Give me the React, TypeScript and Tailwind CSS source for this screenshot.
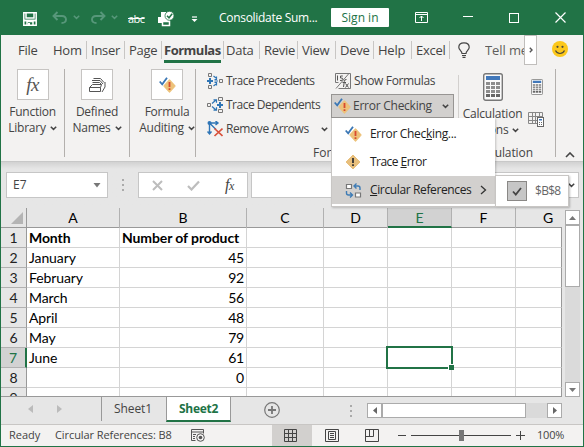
import React from "react";

type P = { className?: string; children?: React.ReactNode };

const Svg = ({ w, h, className = "", children }: P & { w: number; h: number }) => (
  <svg width={w} height={h} viewBox={`0 0 ${w} ${h}`} fill="none" className={"block shrink-0 " + className}>
    {children}
  </svg>
);

const Chevron = ({ className = "text-[#444]" }: P) => (
  <Svg w={7} h={5} className={className}>
    <path d="M.8 .8 3.5 3.4 6.2 .8" stroke="currentColor" strokeWidth="1.5" />
  </Svg>
);

const Slot = ({ className = "", children }: P) => (
  <div className={"flex h-full shrink-0 items-center whitespace-nowrap " + className}>{children}</div>
);

const Check = () => <path d="M.7 4.500 3.200 7.300 8 .8" stroke="#3a76b4" strokeWidth="1.8" />;

const ErrorIcon = () => (
  <Svg w={17} h={16}>
    <path d="M10.5 3 16 9l-5.5 6L5 9z" fill="#edc27a" stroke="#edc27a" strokeWidth="1.2" strokeLinejoin="round" />
    <path d="M10.5 5v5M10.5 11.3v1.7" stroke="#d84a30" strokeWidth="1.8" />
    <Check />
  </Svg>
);

const WarnIcon = () => (
  <Svg w={16} h={16}>
    <path d="M8 1 15 8 8 15 1 8z" fill="#e8bf7c" stroke="#e8bf7c" strokeLinejoin="round" />
    <path d="M8 4v5M8 10.3V12" stroke="#333" strokeWidth="1.8" />
  </Svg>
);

const Precedents = () => (
  <Svg w={16} h={16}>
    <path d="M1.5 .5h3v3h-3zM1.5 12.5h3v3h-3zM12.5 6.5h3v3h-3z" stroke="#777" />
    <path d="M0 8h6M3 5v6" stroke="#2e75b6" strokeWidth="2" />
    <path d="M6.5 3 10 5.7M6.5 13 10 10.3M7.5 8H11M9.5 3.5v3h-2M9.5 12.5v-3h-2" stroke="#2e75b6" strokeWidth="1.2" />
  </Svg>
);

const Dependents = () => (
  <Svg w={16} h={16}>
    <path d="M.5 6.5h3v3h-3zM11.5 .5h4v3h-4zM11.5 12.5h4v3h-4z" stroke="#777" />
    <path d="M10 8h6M13 5v6" stroke="#2e75b6" strokeWidth="2" />
    <path d="M5 6.5 9 3M5 9.5 9 13M6.5 2.8h3v3M6.5 13.2h3v-3" stroke="#2e75b6" strokeWidth="1.2" />
  </Svg>
);

const RemoveArrows = () => (
  <Svg w={16} h={16}>
    <path d="M2.5 1v12M2.5 2h8M3 2.5l6 6M.5 10.5l2 2.5 2-2.5M8.5 0 11 2 8.5 4" stroke="#2e75b6" strokeWidth="1.4" />
    <circle cx="2.5" cy="2" r="2" fill="#2e75b6" />
    <path d="M7.5 7.5 15.5 15M15.5 7.5 7.5 15" stroke="#d8503a" strokeWidth="1.7" />
  </Svg>
);

const ShowFormulas = () => (
  <Svg w={16} h={16}>
    <path d="M.5 .5h15v15H3.500M.5 .5v9h3M1 15.500 13.500 1" stroke="#777" />
    <path d="M2.500 2.500v5M7.800 3H5.500v2q2.500-.3 2.500 1.200T5 7.500" stroke="#555" />
    <path d="M11.500 6.500q-2-.3-2.200 2L8.500 14M7.500 9.500h3.500M10.500 10.500l3 4M13.500 10.500l-3 4" stroke="#555" />
  </Svg>
);

const CircularIcon = () => (
  <Svg w={17} h={15}>
    <path d="M1.5 1.500h5v4h-5zM10.500 10h5v4h-5z" stroke="#777" strokeWidth="1.200" fill="#fff" />
    <path d="M9 3h4q2 0 2 2v2M11.500.5 9 3l2.500 2.500M1.500 8v2q0 2 2 2h4M5 9.500 7.500 12 5 14.500" stroke="#3f7cb5" strokeWidth="1.400" />
  </Svg>
);

const Calculator = ({ w, h }: { w: number; h: number }) => (
  <svg width={w} height={h} viewBox="0 0 20 28" className="block shrink-0" fill="none" preserveAspectRatio="none">
    <rect x=".7" y=".7" width="18.600" height="26.600" rx="2" fill="#fafafa" stroke="#777" strokeWidth="1.400" />
    <path d="M3 3h14v4H3z" fill="#4178ba" />
    {[9, 13, 17, 21].map((y) =>
      [3, 8, 13].map((x) => <path key={x + "-" + y} d={`M${x} ${y}h4v3h-4z`} fill={y > 20 ? "#666" : "#8d8d8d"} />)
    )}
  </svg>
);

const tabs: [string, string, boolean][] = [
  ["File", "w-[35px]", false],
  ["Hom", "w-[38px]", true],
  ["Inser", "w-[38px]", true],
  ["Page", "w-[37px]", true],
];
const tabs2: [string, string, boolean][] = [
  ["Data", "w-[38px]", true],
  ["Revie", "w-[38px]", true],
  ["View", "w-[38px]", true],
  ["Deve", "w-[38px]", true],
  ["Help", "w-[38px]", true],
  ["Excel", "w-[38px]", true],
];

const Tab = ({ t }: { t: [string, string, boolean] }) => (
  <div className={"relative flex h-[30px] shrink-0 items-center pt-[2px] tracking-[-0.25px] " + t[1]}>
    {t[0]}
    {t[2] && <span className="absolute right-[4px] top-[6px] h-[18px] w-px bg-[#c8c6c4]" />}
  </div>
);

const BigGroup = ({ icon, a, b, className = "" }: { icon: React.ReactNode; a: string; b: string; className?: string }) => (
  <div className={"mt-1 flex h-[88px] shrink-0 flex-col items-center border-r border-[#b3b0ad] tracking-[-0.25px] " + className}>
    <div className="flex h-[31px] w-8 items-center justify-center border border-[#c6c4c2] bg-white">{icon}</div>
    <div className="mt-1 flex h-4 items-center">{a}</div>
    <div className="flex h-4 items-center gap-1">
      {b}
      <Chevron />
    </div>
  </div>
);

const rows: [string, string][] = [
  ["Month", "Number of product"],
  ["January", "45"],
  ["February", "92"],
  ["March", "56"],
  ["April", "48"],
  ["May", "79"],
  ["June", "61"],
  ["", "0"],
  ["", ""],
];
const cols: [string, string][] = [
  ["A", "w-[93px]"],
  ["B", "w-[127px]"],
  ["C", "w-[77px]"],
  ["D", "w-[64px]"],
  ["E", "w-[64px]"],
  ["F", "w-[64px]"],
  ["G", "w-[46px]"],
];

function TitleBar() {
  return (
    <div className="flex h-[35px] shrink-0 items-center bg-[#217346] text-white">
      <Slot className="w-[51px] pl-[22px]">
        <Svg w={14} h={14} className="mt-[3px]">
          <path d="M.8 .8h12.400v12.400H.8zM3 1v5h8V1M4 13V9.500h6V13" stroke="#fff" strokeWidth="1.500" />
          <path d="M1 7.500h12v2H1zM5 11h2v2H5z" fill="#fff" />
        </Svg>
      </Slot>
      <Slot className="w-[39px] gap-[6px]">
        <Svg w={15} h={13} className="text-[#57977a]">
          <path d="M5.500 1 1.500 5l4 4M2 5h8q4 0 4 3.500T9.500 12" stroke="currentColor" strokeWidth="1.900" />
        </Svg>
        <Chevron className="text-[#57977a]" />
      </Slot>
      <Slot className="w-[37px] gap-[5px]">
        <Svg w={15} h={13} className="text-[#57977a]">
          <path d="m9.500 1 4 4-4 4M13 5H5Q1 5 1 8.500T5.500 12" stroke="currentColor" strokeWidth="1.900" />
        </Svg>
        <Chevron className="text-[#57977a]" />
      </Slot>
      <Slot className="w-[30px] pt-[3px] text-[11px] tracking-[-0.5px] line-through">abc</Slot>
      <Slot className="w-[33px]">
        <Svg w={17} h={16} className="mt-[3px]">
          <path d="M3 1h5v5H3zM0 6h12v6H0z" fill="#fff" />
          <path d="M4.500 10.500h7v4h-7z" fill="#217346" stroke="#fff" strokeWidth="1.500" />
          <circle cx="11.500" cy="4.800" r="4.500" fill="#fff" stroke="#217346" strokeWidth=".8" />
          <path d="m9 4.800 2 2 3.200-4" stroke="#217346" strokeWidth="1.500" />
        </Svg>
      </Slot>
      <Slot className="w-[28px]">
        <Svg w={7} h={7} className="mt-[3px]">
          <path d="M1 1h5" stroke="#fff" strokeWidth="1.200" />
          <path d="M.5 3h6l-3 3z" fill="#fff" />
        </Svg>
      </Slot>
      <Slot className="w-[112px] text-[12px] tracking-[-0.3px]">Consolidate Sum...</Slot>
      <div className="flex h-[19px] w-[58px] items-center justify-center rounded-[1px] bg-white text-[12px] text-[#217346]">
        Sign in
      </div>
      <Slot className="w-[74px] pl-[26px]">
        <Svg w={13} h={11}>
          <path d="M.5 .5h12v10H.5zM.5 2.500h12M6.500 9V4M4.500 6l2-2 2 2" stroke="#fff" />
        </Svg>
      </Slot>
      <Slot className="w-[46px]">
        <div className="mb-[2px] h-px w-[10px] bg-white" />
      </Slot>
      <Slot className="w-[46px]">
        <div className="size-[10px] border border-white" />
      </Slot>
      <Svg w={11} h={11}>
        <path d="m.5 .5 10 10m0-10-10 10" stroke="#fff" strokeWidth="1.200" />
      </Svg>
    </div>
  );
}

function TabStrip() {
  return (
    <div className="flex h-[30px] shrink-0 items-center pl-[17px] text-[13px] text-[#444]">
      {tabs.map((t) => (
        <Tab key={t[0]} t={t} />
      ))}
      <div className="relative -ml-[2px] flex h-[30px] w-[62px] shrink-0 items-center pt-[2px] font-bold tracking-[-0.5px]">
        Formulas
        <span className="absolute bottom-[2px] left-0 h-[3px] w-[57px] bg-[#217346]" />
        <span className="absolute right-[2px] top-[6px] h-[18px] w-px bg-[#c8c6c4]" />
      </div>
      {tabs2.map((t) => (
        <Tab key={t[0]} t={t} />
      ))}
      <Slot className="w-[31px] pl-[4px]">
        <Svg w={12} h={16}>
          <path d="M4 11.500Q4 10 2.300 8.300 .8 7 .8 5.300.8 .8 6 .8t5.200 4.500q0 1.700-1.500 3Q8 10 8 11.500zM4 13.500h4M4.500 15.300h3" stroke="#444" strokeWidth="1.200" />
        </Svg>
      </Slot>
      <div className="w-[39px] shrink-0 overflow-hidden whitespace-nowrap pt-[2px] tracking-[-0.1px] text-[#605e5c]">Tell me</div>
      <div className="flex h-[30px] w-[13px] shrink-0 items-center justify-center border border-[#c0bebc] bg-white">
        <Svg w={4} h={6}>
          <path d="m.8 .8 2.200 2.200L.8 5.200" stroke="#555" strokeWidth="1.400" />
        </Svg>
      </div>
      <Svg w={16} h={16} className="mb-[2px] ml-[15px]">
        <circle cx="8" cy="8" r="8" fill="#fcc81b" />
        <circle cx="5.500" cy="5.800" r="1.100" fill="#4b4a3c" />
        <circle cx="10.500" cy="5.800" r="1.100" fill="#4b4a3c" />
        <path d="M3.500 9.500q1.500 3 4.500 3t4.500-3" stroke="#4b4a3c" strokeWidth="1.200" />
      </Svg>
    </div>
  );
}

const fx = "font-['Liberation_Serif',serif] italic";

function Ribbon() {
  return (
    <div className="relative flex h-[96px] shrink-0 text-[12px] leading-4 text-[#444]">
      <BigGroup
        className="w-[64px]"
        a="Function"
        b="Library"
        icon={<span className={fx + " text-[19px] tracking-[-0.5px] text-[#555]"}>fx</span>}
      />
      <BigGroup
        className="w-[65px]"
        a="Defined"
        b="Names"
        icon={
          <Svg w={17} h={16}>
            <path d="M.5 10.500h11v4H.5zM.5 10.500l3-3h9l-1 3M3.500 5.500h7l2 2M3 3.500h8l3 3.500M4.500 1.500h7l3.500 4M13 15l3-5V5" stroke="#555" />
          </Svg>
        }
      />
      <BigGroup className="w-[66px] pl-[9px]" a="Formula" b="Auditing" icon={<ErrorIcon />} />
      <div className="flex w-[264px] shrink-0 flex-col pt-1">
        <div className="flex h-[72px]">
          <div className="flex w-[135px] shrink-0 flex-col pl-[11px]">
            <Slot className="!h-6 gap-[3px] tracking-[-0.5px]"><Precedents />Trace Precedents</Slot>
            <Slot className="!h-6 gap-[3px] tracking-[-0.5px]"><Dependents />Trace Dependents</Slot>
            <Slot className="!h-6 gap-[3px] tracking-[-0.4px]"><RemoveArrows /><span className="w-[92px]">Remove Arrows</span><Chevron /></Slot>
          </div>
          <div className="flex w-[123px] shrink-0 flex-col">
            <Slot className="!h-6 gap-[3px] pl-[4px] tracking-[-0.35px]"><ShowFormulas />Show Formulas</Slot>
            <div className="mt-[1px] flex h-[24px] items-center gap-[2px] border border-[#979593] bg-[#d2d0ce] pl-[2px] tracking-[-0.25px]">
              <ErrorIcon />
              <span className="w-[87px]">Error Checking</span>
              <Chevron />
            </div>
          </div>
        </div>
        <div className="mt-[4px] pl-[117px]">Formula Auditing</div>
      </div>
      <div className="-ml-[2px] mt-1 flex h-[88px] w-[98px] shrink-0 border-r border-[#b3b0ad]">
        <div className="mt-[6px] h-[55px] w-px bg-[#d2d0ce]" />
        <div className="flex w-[67px] shrink-0 flex-col items-center pt-[4px]">
          <Calculator w={20} h={28} />
          <div className="mt-[5px] h-4 tracking-[-0.2px]">Calculation</div>
          <div className="flex h-4 items-center gap-1 tracking-[-0.2px]">Options <Chevron /></div>
          <div className="ml-[20px] mt-[7px] tracking-[-0.1px]">Calculation</div>
        </div>
        <div className="ml-[2px] flex flex-col items-center gap-[17px] pt-[10px]">
          <Calculator w={12} h={16} />
          <Svg w={17} h={16}>
            <path d="M.5 .5h14v11H.5zM.5 4.500h14M.5 8.500h9M4.500 .5v11M7.500 .5v11M11.500 .5v4" stroke="#888" />
            <rect x="9.500" y="5.500" width="6" height="9" fill="#fff" stroke="#666" />
            <path d="M11 7h3v1.500h-3z" fill="#4178ba" />
            <path d="M11 10h1v1h-1zM13 10h1v1h-1zM11 12h1v1h-1zM13 12h1v1h-1z" fill="#666" />
          </Svg>
        </div>
      </div>
      <Svg w={10} h={6} className="ml-[9px] mt-[87px]">
        <path d="m1 5 4-4 4 4" stroke="#444" strokeWidth="1.600" />
      </Svg>
    </div>
  );
}

function Menu() {
  return (
    <div className="absolute left-[330px] top-[118px] flex h-[89px] w-[164px] flex-col border-b border-l border-[#c8c6c4] bg-white py-[2px] text-[12px] text-[#222] shadow-[1px_1px_2px_rgba(0,0,0,.2)]">
      <Slot className="!h-7 gap-[8px] pl-[13px] tracking-[-0.32px]"><ErrorIcon /><span>Error Chec<u>k</u>ing...</span></Slot>
      <Slot className="!h-7 gap-[9px] pl-[13px] tracking-[-0.55px]"><WarnIcon /><span>Trace <u>E</u>rror</span></Slot>
      <Slot className="!h-7 gap-[8px] bg-[#d2d0ce] pl-[13px] tracking-[-0.37px]">
        <CircularIcon />
        <span className="w-[102px]"><u>C</u>ircular References</span>
        <Svg w={7} h={10}><path d="m1 1 4.500 4L1 9" stroke="#333" strokeWidth="1.300" /></Svg>
      </Slot>
      <div className="absolute left-[163px] top-[57px] flex h-[32px] w-[74px] items-center gap-[8px] border border-[#c8c6c4] bg-white pl-[11px] tracking-[-0.7px] text-[#666] shadow-[1px_1px_2px_rgba(0,0,0,.25)]">
        <div className="flex size-5 items-center justify-center border border-[#8a8886] bg-[#c6c6c6]">
          <Svg w={10} h={9}><path d="m1 4.500 2.800 3L9 1" stroke="#444" strokeWidth="1.800" /></Svg>
        </div>
        $B$8
      </div>
    </div>
  );
}

function FormulaBar() {
  return (
    <div className="flex h-[47px] shrink-0 border-t border-[#c8c8c8] bg-linear-to-b from-[#d2d2d2] via-[#e6e6e6] via-15% to-[#e6e6e6] pl-[5px] pt-[10px]">
      <div className="flex h-[26px] w-[102px] items-center justify-between border border-[#c6c6c6] bg-white pl-[6px] pr-[6px] text-[12px] text-[#444]">
        E7
        <Svg w={8} h={5}><path d="M.5 0h7L4 4.500z" fill="#777" /></Svg>
      </div>
      <div className="flex h-[26px] w-[30px] flex-col items-center justify-center gap-[3px]">
        <i className="size-[2px] bg-[#aaa]" /><i className="size-[2px] bg-[#aaa]" /><i className="size-[2px] bg-[#aaa]" />
      </div>
      <div className="flex h-[26px] w-[110px] items-center border border-[#c6c6c6] bg-white pl-[13px] text-[#444]">
        <Svg w={11} h={11}><path d="m1 1 9 9m0-9-9 9" stroke="#bdbdbd" strokeWidth="2" /></Svg>
        <Svg w={13} h={11} className="ml-[24px]"><path d="m1 6 3.500 3.500L12 1.500" stroke="#bdbdbd" strokeWidth="2.200" /></Svg>
        <span className={fx + " ml-[25px] text-[16px] tracking-[-0.5px] text-[#444]"}>
          f<span className="text-[12px]">x</span>
        </span>
      </div>
      <div className="ml-[3px] flex h-[26px] w-[328px] items-center justify-end border border-[#c6c6c6] bg-white pr-[3px]">
        <Chevron />
      </div>
    </div>
  );
}

function Sheet() {
  return (
    <div className="flex h-[189px] shrink-0 bg-[#e6e6e6]">
      <div className="relative flex h-[189px] w-[561px] flex-col overflow-hidden border-b border-[#999] font-[Lato,sans-serif] text-[14px] text-black">
        <div className="flex h-[20px] shrink-0 border-b border-[#999]">
          <div className="flex w-[26px] items-end justify-end border-r border-[#999] pb-[3px] pr-[3px]">
            <Svg w={12} h={12}><path d="M12 0v12H0z" fill="#b4b4b4" /></Svg>
          </div>
          {cols.map(([c, w]) => (
            <div
              key={c}
              className={
                "flex h-[20px] shrink-0 items-center justify-center " +
                w +
                (c === "G" ? " pb-[2px] pl-[18px]" : " border-r border-[#b1b1b1]") +
                (c === "E" ? " border-b-2 border-b-[#217346] bg-[#d2d2d2] text-[#217346]" : " pb-[2px]")
              }
            >
              {c}
            </div>
          ))}
        </div>
        {rows.map((r, i) => (
          <div key={i} className="flex h-[20px] shrink-0">
            <div
              className={
                "flex w-[26px] items-center justify-center border-b " +
                (i === 6
                  ? "border-r-2 border-b-[#b1b1b1] border-r-[#217346] bg-[#d2d2d2] text-[#217346]"
                  : "border-r border-b-[#b1b1b1] border-r-[#999] text-[#222]")
              }
            >
              {i + 1}
            </div>
            {cols.map(([c, w], j) => (
              <div
                key={c}
                className={
                  "flex items-center whitespace-nowrap border-b border-[#d4d4d4] bg-white " +
                  w +
                  (c === "G" ? " !border-r-[#999] border-r" : " border-r") +
                  (j === 1 && i > 0 ? " justify-end pr-[2px] tracking-[-0.2px]" : " pl-[2px] tracking-[-0.1px]") +
                  (i === 0 ? " font-bold" : "")
                }
              >
                {j < 2 ? r[j] : ""}
              </div>
            ))}
          </div>
        ))}
        <div className="absolute left-[385px] top-[138px] h-[23px] w-[67px] border-2 border-[#217346]">
          <span className="absolute -bottom-[3px] -right-[3px] size-[6px] border-l border-t border-white bg-[#217346]" />
        </div>
      </div>
      <div className="ml-[3px] mt-[2px] flex h-[187px] w-[15px] flex-col bg-[#dadada]">
        <div className="flex h-[15px] items-center justify-center border border-[#ababab] bg-white">
          <Svg w={7} h={4}><path d="M0 4h7L3.500 0z" fill="#777" /></Svg>
        </div>
        <div className="h-[62px] border border-[#ababab] bg-white" />
        <div className="mt-auto flex h-[15px] items-center justify-center border border-[#ababab] bg-white">
          <Svg w={7} h={4}><path d="M0 0h7L3.500 4z" fill="#777" /></Svg>
        </div>
      </div>
    </div>
  );
}

function SheetTabs() {
  return (
    <div className="flex h-[27px] shrink-0 bg-[#e6e6e6] text-[12px] text-[#444]">
      <Slot className="!h-[24px] w-[101px] border-r border-[#999] pl-[27px]">
        <Svg w={5} h={8}><path d="M5 0v8L0 4z" fill="#bbb" /></Svg>
        <Svg w={5} h={8} className="ml-[24px]"><path d="M0 0v8l5-4z" fill="#bbb" /></Svg>
      </Slot>
      <Slot className="!h-[24px] w-[64px] justify-center pr-[2px] tracking-[-0.1px]">Sheet1</Slot>
      <div className="-mt-px flex h-[26px] w-[65px] shrink-0 items-center justify-center border-x border-b-2 border-x-[#999] border-b-[#217346] bg-white pt-[2px] font-bold tracking-[-0.3px] text-[#217346]">
        Sheet2
      </div>
      <Slot className="!h-[26px] w-[120px] pl-[33px]">
        <Svg w={16} h={16}>
          <circle cx="8" cy="8" r="7.300" stroke="#777" strokeWidth="1.200" />
          <path d="M8 4v8M4 8h8" stroke="#777" strokeWidth="1.800" />
        </Svg>
      </Slot>
      <div className="ml-[-1px] flex w-[2px] flex-col justify-center gap-[3px]">
        <i className="size-[2px] bg-[#aaa]" /><i className="size-[2px] bg-[#aaa]" /><i className="size-[2px] bg-[#aaa]" />
      </div>
      <div className="ml-[15px] mt-[6px] flex h-[15px] w-[195px] bg-[#dadada]">
        <div className="flex w-[15px] items-center justify-center border border-[#ababab] bg-white">
          <Svg w={4} h={7}><path d="M4 0v7L0 3.500z" fill="#666" /></Svg>
        </div>
        <div className="w-[144px] border border-[#ababab] bg-white" />
        <div className="ml-auto flex w-[15px] items-center justify-center border border-[#ababab] bg-white">
          <Svg w={4} h={7}><path d="M0 0v7l4-3.500z" fill="#666" /></Svg>
        </div>
      </div>
    </div>
  );
}

function StatusBar() {
  return (
    <div className="flex h-[22px] shrink-0 items-center border-t border-[#c8c6c4] text-[11px] text-[#444]">
      <Slot className="w-[46px] pl-[8px]">Ready</Slot>
      <Slot className="w-[144px] pl-[8px] tracking-[-0.08px]">Circular References: B8</Slot>
      <Slot className="w-[81px]">
        <Svg w={14} h={13}>
          <path d="M.5 11.500V.5h12v4M.5 3h12M2 5.500h3M2 7.500h2M2 9.500h2M.5 11.500h4" stroke="#555" />
          <circle cx="9.500" cy="8.500" r="3.800" stroke="#555" /><circle cx="9.500" cy="8.500" r="1.800" fill="#555" />
        </Svg>
      </Slot>
      <div className="flex h-full w-[40px] items-center bg-[#d2d0ce] pl-[12px]">
        <Svg w={13} h={13}><path d="M.5 .5h12v12H.5zM.5 4.500h12M.5 8.500h12M4.500 .5v12M8.500 .5v12" stroke="#444" /></Svg>
      </div>
      <Slot className="w-[53px] pl-[13px]">
        <Svg w={14} h={13}><path d="M.5 .5h13v12H.5zM3.500 2.500h7v8h-7zM5 4.500h4M5 6.500h4M5 8.500h4" stroke="#444" /></Svg>
      </Slot>
      <Slot className="w-[33px]">
        <Svg w={14} h={13}><path d="M.5 .5h13v12H.5zM.5 7.500h8V.5M4.500 .5v7" stroke="#444" /></Svg>
      </Slot>
      <Slot><div className="h-px w-2 bg-[#444]" /></Slot>
      <div className="relative ml-[5px] h-px w-[100px] bg-[#444]">
        <div className="absolute left-[48px] top-[-5px] h-[11px] w-[5px] bg-[#777]" />
      </div>
      <Svg w={9} h={9} className="ml-[5px]"><path d="M4.500 0v9M0 4.500h9" stroke="#444" /></Svg>
      <div className="ml-[12px] tracking-[-0.2px]">100%</div>
    </div>
  );
}

export default function App() {
  return (
    <div className="relative flex h-[447px] w-[584px] flex-col overflow-hidden border-x border-b border-[#217346] bg-[#f3f2f1] font-['Open_Sans','Noto_Sans',sans-serif]">
      <TitleBar />
      <TabStrip />
      <Ribbon />
      <FormulaBar />
      <Sheet />
      <SheetTabs />
      <StatusBar />
      <Menu />
    </div>
  );
}
